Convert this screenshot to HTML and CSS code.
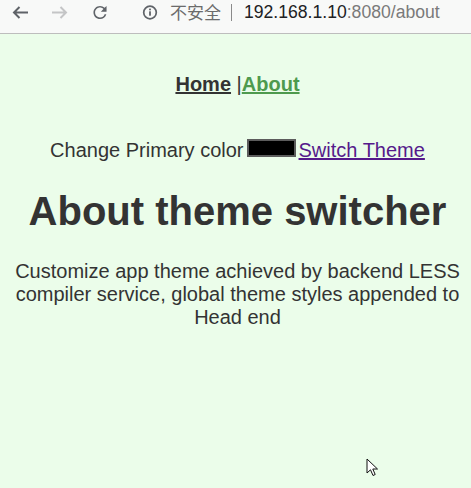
FILE: index.html
```html
<!DOCTYPE html>
<html>
<head>
<meta charset="utf-8">
<link rel="stylesheet" href="styles.css">
</head>
<body>
<div class="toolbar">
  <svg class="ico ico-back" width="24" height="24" viewBox="0 0 24 24"><path d="M20 12.5H6 M11.5 7 L6 12.5 L11.5 18" fill="none" stroke="#5f6368" stroke-width="2"/></svg>
  <svg class="ico ico-fwd" width="24" height="24" viewBox="0 0 24 24"><path d="M4 12.5H18 M12.5 7 L18 12.5 L12.5 18" fill="none" stroke="#c4c5c6" stroke-width="2"/></svg>
  <svg class="ico ico-reload" width="24" height="24" viewBox="0 0 24 24"><g transform="translate(12 12.5) scale(0.82) translate(-12 -12)"><path fill="#5f6368" d="M17.65 6.35A7.958 7.958 0 0012 4c-4.42 0-7.99 3.58-7.99 8s3.57 8 7.99 8c3.73 0 6.84-2.55 7.73-6h-2.08A5.990 5.990 0 0112 18c-3.31 0-6-2.69-6-6s2.690-6 6-6c1.66 0 3.140.69 4.220 1.78L13 11h7V4l-2.35 2.35z"/></g></svg>
  <svg class="ico ico-info" width="24" height="24" viewBox="0 0 24 24"><circle cx="12" cy="12.5" r="6.3" fill="none" stroke="#5f6368" stroke-width="1.7"/><rect x="11.1" y="11.3" width="1.8" height="4.4" fill="#5f6368"/><rect x="11.1" y="8.6" width="1.8" height="1.7" fill="#5f6368"/></svg>
  <span class="insecure">不安全</span>
  <span class="sep"></span>
  <span class="url"><span class="host">192.168.1.10</span>:8080/about</span>
</div>
<div class="page">
  <div class="nav"><a class="nav-link" href="#">Home</a> |<a class="nav-link active" href="#">About</a></div>
  <div class="controls">Change Primary color<span class="swatch"></span><a class="switch" href="#">Switch Theme</a></div>
  <h1 class="title">About theme switcher</h1>
  <p class="desc">Customize app theme achieved by backend LESS compiler service, global theme styles appended to Head end</p>
</div>
<svg class="cursor" width="14" height="20" viewBox="0 0 14 20"><path d="M1 1 L1 15 L4.5 11.8 L7 17.5 L9.2 16.5 L6.8 11 L11.5 11 Z" fill="#fff" stroke="#111" stroke-width="1" stroke-linejoin="round"/></svg>
</body>
</html>
```
FILE: styles.css
```css
html, body {
  margin: 0;
  padding: 0;
}
body {
  width: 471px;
  height: 488px;
  background: #ebfdea;
  font-family: "Liberation Sans", Arial, sans-serif;
  color: #333;
  overflow: hidden;
  position: relative;
}
.toolbar {
  height: 33px;
  background: #f8f9f8;
  border-bottom: 1px solid #bdbdbd;
  display: flex;
  align-items: flex-start;
}
.ico {
  flex: none;
  display: block;
}
.ico-back { margin-left: 8px; }
.ico-fwd { margin-left: 16px; }
.ico-reload { margin-left: 16px; }
.ico-info { margin-left: 26px; }
.insecure {
  margin-left: 8px;
  font-family: "Noto Sans CJK SC", sans-serif;
  font-size: 17px;
  line-height: 24px;
  color: #6b6b6b;
}
.sep {
  width: 1px;
  height: 17px;
  background: #8a8a8a;
  margin: 4px 0 0 10px;
}
.url {
  margin-left: 12px;
  font-size: 17.6px;
  line-height: 24px;
  color: #7a7a7a;
  white-space: nowrap;
}
.host {
  color: #202124;
}
.page {
  padding: 0 8px 0 12px;
  text-align: center;
}
.nav {
  padding-top: 39px;
  font-size: 20px;
  line-height: 23px;
}
.nav-link {
  color: #333;
  font-weight: bold;
}
.nav-link.active {
  color: #4e9a4e;
}
.controls {
  margin-top: 43px;
  font-size: 20px;
  line-height: 23px;
}
.swatch {
  display: inline-block;
  width: 45px;
  height: 14px;
  background: #000;
  border: 2px solid #5c5c5c;
  margin: 0 3px;
}
.switch {
  color: #551a8b;
}
.title {
  margin: 26px 0;
  font-size: 40px;
  line-height: 46px;
  font-weight: bold;
}
.desc {
  margin: 0;
  font-size: 20px;
  line-height: 23px;
}
.cursor {
  position: absolute;
  left: 366px;
  top: 458px;
}
```
